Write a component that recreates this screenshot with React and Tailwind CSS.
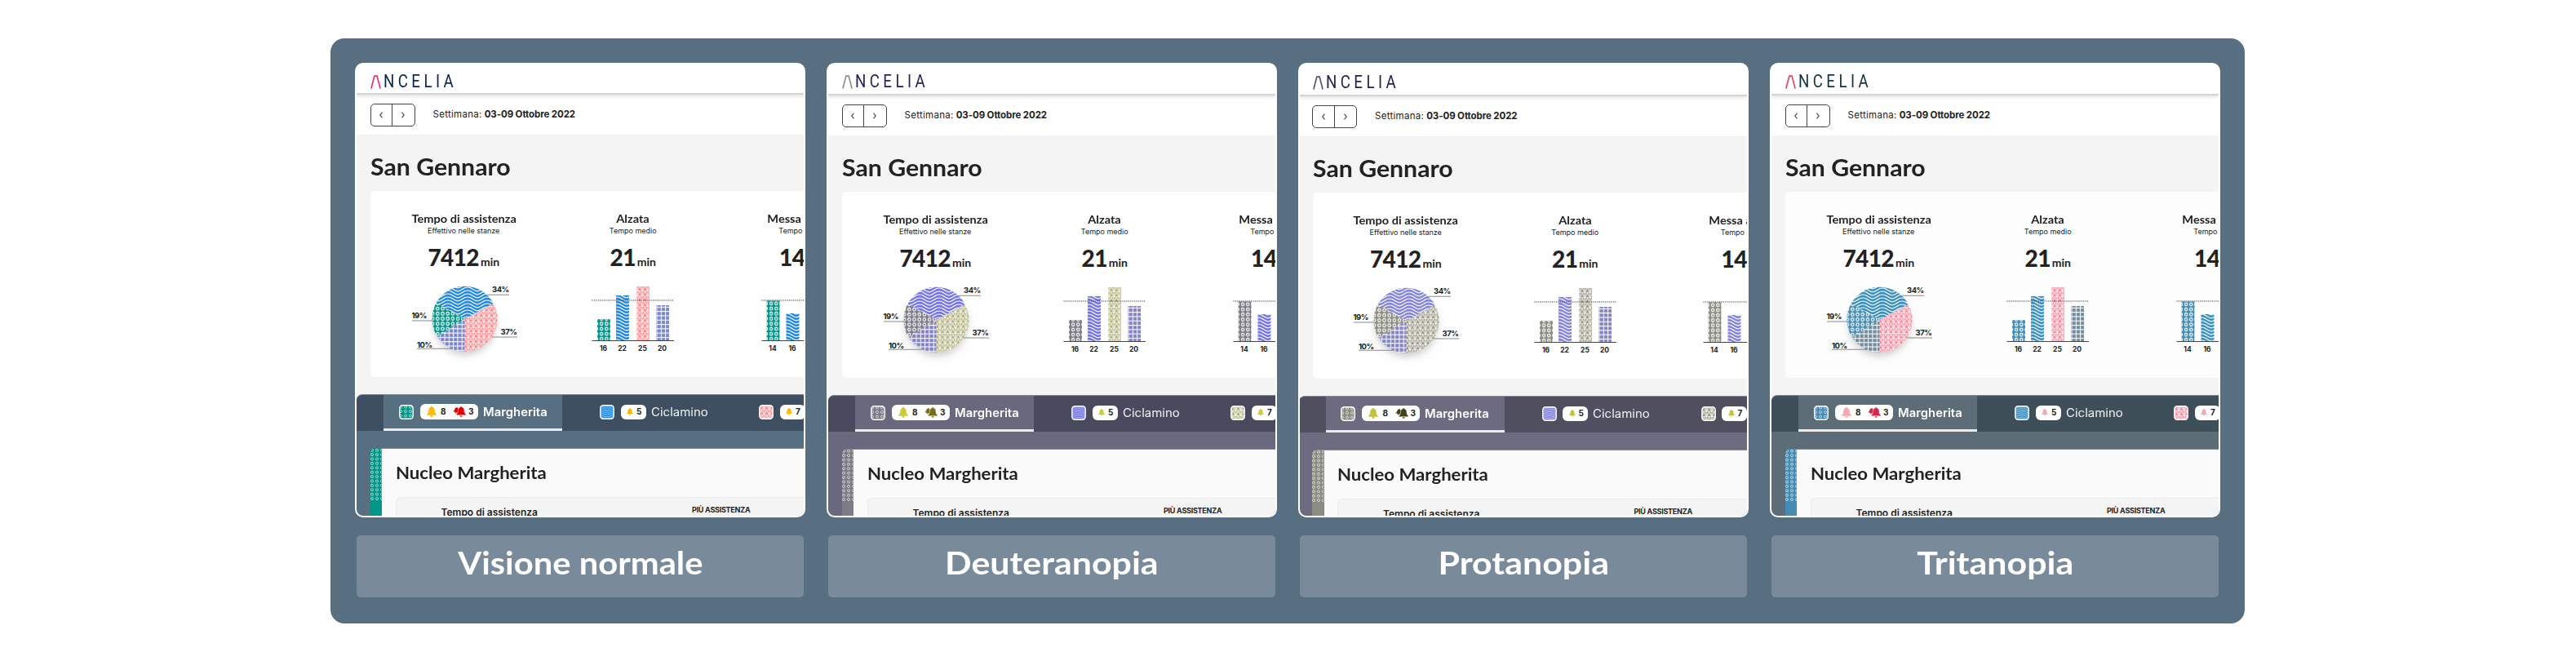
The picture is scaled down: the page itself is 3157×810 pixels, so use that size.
const visions = [
  {
    id: 'normale', label: 'Visione normale', stretch: 'scale-x-[1.07]', shift: '', header: 'h-[37px]',
    mark: '#ec2f7b', brand: '#0b2350', ring: '#009688', wave: '#1e8ce8', tri: '#ff8588', grid: '#7b86cf',
    bell: '#ffb900', alarm: '#e20000', bar: 'bg-[#3d4f60]', tab: 'bg-[#586e81]', edge: 'border-[#7d8d9b]', card: 'bg-white',
  },
  {
    id: 'deuteranopia', label: 'Deuteranopia', stretch: 'scale-x-[1.1]', shift: '', header: 'h-[38px]',
    mark: '#8f8f83', brand: '#25235a', ring: '#7c7b86', wave: '#7676e6', tri: '#b0b07d', grid: '#8382c9',
    bell: '#cbcc38', alarm: '#736d1c', bar: 'bg-[#4a4a5e]', tab: 'bg-[#69687e]', edge: 'border-[#8a899a]', card: 'bg-[#fefefe]',
  },
  {
    id: 'protanopia', label: 'Protanopia', stretch: 'scale-x-[1.1]', shift: 'pt-px -ml-[1.5px]', header: 'h-[38px]',
    mark: '#59507f', brand: '#242150', ring: '#8c8c82', wave: '#8484e3', tri: '#999984', grid: '#8584c8',
    bell: '#c3c23b', alarm: '#43401a', bar: 'bg-[#504f60]', tab: 'bg-[#6c6b80]', edge: 'border-[#8c8b9b]', card: 'bg-[#fefefe]',
  },
  {
    id: 'tritanopia', label: 'Tritanopia', stretch: 'scale-x-[1.1]', shift: '', header: 'h-[38px]',
    mark: '#e04564', brand: '#17303f', ring: '#458cb4', wave: '#3d90c0', tri: '#f4899c', grid: '#738b9d',
    bell: '#f4a9b4', alarm: '#cf2a4b', bar: 'bg-[#3f4f59]', tab: 'bg-[#5c6d78]', edge: 'border-[#808d96]', card: 'bg-[#fdfdfd]',
  },
];

const Patterns = ({ v }) => (
  <svg aria-hidden className="absolute size-0">
    <defs>
      <pattern id={`ring-${v.id}`} width="6.2" height="6.2" patternUnits="userSpaceOnUse">
        <rect width="6.2" height="6.2" fill={v.ring} />
        <ellipse cx="3.1" cy="3.1" rx="1.7" ry="1.9" fill="none" stroke="#fff" strokeWidth="1.1" />
      </pattern>
      <pattern id={`dot-${v.id}`} width="6" height="5.4" patternUnits="userSpaceOnUse">
        <rect width="6" height="5.4" fill={v.ring} />
        <circle cx="2" cy="2.7" r="1.5" fill="none" stroke="#fff" strokeOpacity=".75" strokeWidth=".8" />
      </pattern>
      <pattern id={`wave-${v.id}`} width="24" height="4" patternUnits="userSpaceOnUse">
        <rect width="24" height="4" fill={v.wave} />
        {[-8, -4, 0, 4, 8].map((y) => (
          <path key={y} d={`M-1 ${y + 5}C4 ${y + 5} 7 ${y} 12 ${y}S20 ${y + 5} 25 ${y + 5}`} fill="none" stroke="#fff" strokeWidth="1.2" />
        ))}
      </pattern>
      <pattern id={`arc-${v.id}`} width="18" height="2.6" patternUnits="userSpaceOnUse">
        <rect width="18" height="2.6" fill={v.wave} />
        {[-5.2, -2.6, 0, 2.6].map((y) => (
          <path key={y} d={`M0 ${y + 5}Q9 ${y - 3} 18 ${y + 5}`} fill="none" stroke="#fff" strokeOpacity=".7" strokeWidth=".7" />
        ))}
      </pattern>
      <pattern id={`tri-${v.id}`} width="6.4" height="6.4" patternUnits="userSpaceOnUse">
        <rect width="6.4" height="6.4" fill={v.tri} />
        <path d="M0 6.4L3.2 0L6.4 6.4M0 6.2H6.4M0 0V6.4M6.4 0V6.4" fill="none" stroke="#fff" strokeWidth=".9" />
      </pattern>
      <pattern id={`grid-${v.id}`} width="5.3" height="5.3" patternUnits="userSpaceOnUse">
        <rect width="5.3" height="5.3" fill={v.grid} />
        <path d="M0 .5H5.3M.5 0V5.3" stroke="#fff" strokeWidth="1" />
      </pattern>
    </defs>
  </svg>
);

const Logo = ({ v }) => (
  <div className="flex items-center gap-[3px]">
    <svg viewBox="0 0 13 17" className="w-[13px] h-[17px]" fill="none" stroke={v.mark} strokeWidth="1.7">
      <path d="M.9 16.5L4.9 1.1H8.1L12.1 16.5" />
    </svg>
    <span className="origin-left scale-x-85 font-['Roboto'] text-[22px] leading-none tracking-[5.2px]" style={{ color: v.brand }}>NCELIA</span>
  </div>
);

const Pie = ({ v }) => (
  <svg viewBox="0 0 207 100" className="w-[207px] h-[100px] overflow-visible font-['Inter'] text-[9.5px] font-bold tracking-[-0.5px]">
    <circle cx="104.5" cy="49" r="38" className="drop-shadow-[0_4px_5px_rgba(0,0,0,0.2)]" fill="#e4e4e4" />
    <path d="M104.5 46.7L69.5 27.3A40 40 0 0 1 139.8 27.9Z" fill={`url(#wave-${v.id})`} />
    <path d="M104.5 46.7L139.8 27.9A40 40 0 0 1 104.5 86.7Z" fill={`url(#tri-${v.id})`} />
    <path d="M104.5 46.7V86.7A40 40 0 0 1 71 68.6Z" fill={`url(#grid-${v.id})`} />
    <path d="M104.5 46.7L71 68.6A40 40 0 0 1 69.5 27.3Z" fill={`url(#ring-${v.id})`} />
    <g stroke="#8a8a8a" strokeWidth="1.1">
      <path d="M132 17.2H159M138 69H169M40 49H65M46 83.3H90" />
    </g>
    <g fill="#222">
      <text x="138" y="14">34%</text>
      <text x="148.5" y="66.3">37%</text>
      <text x="39.5" y="46">19%</text>
      <text x="46" y="81.5">10%</text>
    </g>
  </svg>
);

const Bars = ({ v, bars }) => (
  <svg viewBox="0 0 207 100" className="w-[207px] h-[100px] font-['Inter'] text-[8.5px] font-bold">
    {bars.map(([value, x, y, kind]) => (
      <g key={kind}>
        <rect x={x} y={y} width="16" height={73 - y} fill={`url(#${kind}-${v.id})`} />
        <text x={x + 7.5} y="86.3" textAnchor="middle" fill="#222">{value}</text>
      </g>
    ))}
    <path d="M53.5 24H154" stroke="#333" strokeWidth="1" strokeDasharray="1.2 1.2" />
    <path d="M53.5 73.5H154" stroke="#444" strokeWidth="1" />
  </svg>
);

const Stat = ({ title, sub, value, children }) => (
  <div className="flex flex-col items-center w-[207.5px] shrink-0 whitespace-nowrap text-[#222]">
    <h3 className="scale-x-[1.04] font-['Lato'] font-bold text-[14px] leading-[14px]">{title}</h3>
    <p className="mt-[2px] font-['Inter'] text-[9px] leading-[12px]">{sub}</p>
    <p className="mt-[12px] h-7 flex items-baseline gap-[2px] font-['Lato'] font-black text-[28px] leading-[28px] tracking-[-0.6px]">
      {value}
      <span className="text-[14px] font-bold tracking-normal">min</span>
    </p>
    <div className="mt-[15px]">{children}</div>
  </div>
);

const BELL = 'M6 0C6.7 0 7.1.5 7.1 1.1C8.9 1.6 9.7 3 9.7 4.8C9.7 7.5 10.5 8.7 11.8 9.7V10.7H.2V9.7C1.5 8.7 2.3 7.5 2.3 4.8C2.3 3 3.1 1.6 4.9 1.1C4.9.5 5.3 0 6 0ZM4.3 11H7.7C7.6 12.3 6.900 13 6 13S4.400 12.300 4.300 11Z';

const Bell = ({ color, className }) => (
  <svg viewBox="0 0 12 13" className={className} fill={color}>
    <path d={BELL} />
  </svg>
);

// Small bell tucked behind a full-size one
const Alarm = ({ color }) => (
  <svg viewBox="0 0 16 13" className="w-[16px] h-[13px]" fill={color}>
    <path d={BELL} transform="translate(1.8 .2) rotate(14) scale(.58)" />
    <path d={BELL} transform="translate(4.2 0)" stroke="#fff" strokeWidth=".4" />
  </svg>
);

const Swatch = ({ v, kind }) => (
  <svg viewBox="0 0 18 18" className="size-[18px] shrink-0">
    <rect x=".8" y=".8" width="16.4" height="16.4" rx="3.5" fill={`url(#${kind}-${v.id})`} stroke="#fff" strokeWidth="1.4" />
  </svg>
);

const Tabs = ({ v }) => (
  <div className={`h-[45px] pl-[33px] flex rounded-tl-[7px] border-t overflow-hidden font-['Inter'] text-white whitespace-nowrap ${v.bar} ${v.edge}`}>
    <div className={`w-[219px] shrink-0 pl-[18.5px] flex items-center border-b-[3px] border-[#ebebeb] ${v.tab}`}>
      <Swatch v={v} kind="dot" />
      <span className="ml-[8px] w-[71px] h-[19.5px] pl-[8px] flex items-center rounded-[6px] bg-white text-[10px] font-bold text-[#222]">
        <Bell color={v.bell} className="w-[12px] h-[13px]" />
        <span className="ml-[5.5px] w-[7px]">8</span>
        <span className="ml-[8px]"><Alarm color={v.alarm} /></span>
        <span className="ml-[3px]">3</span>
      </span>
      <span className="ml-[6px] origin-left scale-x-[1.06] text-[14px] font-semibold">Margherita</span>
    </div>
    <div className="w-[195px] shrink-0 pl-[46px] pb-[3px] flex items-center">
      <Swatch v={v} kind="arc" />
      <span className="ml-[7.5px] w-[31px] h-[18px] pl-[7.5px] flex items-center rounded-[6px] bg-white text-[10px] font-bold text-[#222]">
        <Bell color={v.bell} className="w-[8px] h-[8.5px]" />
        <span className="ml-[4px]">5</span>
      </span>
      <span className="ml-[6px] origin-left scale-x-[1.07] text-[14px] text-[#f0f2f4]">Ciclamino</span>
    </div>
    <div className="w-[195px] shrink-0 pl-[46px] pb-[3px] flex items-center">
      <Swatch v={v} kind="tri" />
      <span className="ml-[7.5px] w-[31px] h-[18px] pl-[7.5px] flex items-center rounded-[6px] bg-white text-[10px] font-bold text-[#222]">
        <Bell color={v.bell} className="w-[8px] h-[8.5px]" />
        <span className="ml-[4px]">7</span>
      </span>
    </div>
  </div>
);

const Nucleo = ({ v }) => (
  <div className={`h-[104px] pt-[20.5px] pl-[16.5px] ${v.tab}`}>
    <div className="h-full flex">
      <svg className="w-[14.5px] h-[90px] shrink-0 rounded-tl-[6px]">
        <rect width="14.5" height="90" fill={v.ring} />
        <rect width="14.5" height="65" fill={`url(#dot-${v.id})`} />
      </svg>
      <div className={`grow pl-[16.5px] pt-[17px] border-t bg-[#fafafa] ${v.edge}`}>
        <h2 className="origin-left scale-x-[1.08] font-['Lato'] font-bold text-[20.5px] leading-[24px] text-[#222]">Nucleo Margherita</h2>
        <div className="mt-[18px] h-[60px] flex rounded-l-[6px] border border-r-0 border-[#ececec] bg-[#f4f4f4] font-['Inter'] text-[#222] whitespace-nowrap">
          <span className="w-[307.5px] ml-[55px] shrink-0 pt-[11.5px] text-[12px] leading-[14px] font-semibold">Tempo di assistenza</span>
          <span className="pt-[9.5px] text-[9px] leading-[12px] font-bold tracking-[-0.25px]">PIÙ ASSISTENZA</span>
        </div>
      </div>
    </div>
  </div>
);

const Screen = ({ v }) => (
  <div className="w-[552px] h-[557px] rounded-[10px] border-2 border-white bg-white overflow-hidden">
    <Patterns v={v} />
    <div className={v.shift}>
      <div className={`${v.header} relative pl-[17px] pt-[10px] border-b-2 border-[#d4d4d4] shadow-[0_2px_4px_rgba(0,0,0,0.12)]`}>
        <Logo v={v} />
      </div>
      <div className="h-[49px] pl-[16.5px] flex items-center font-['Inter'] text-[11.5px] text-[#222]">
        <div className="w-[55px] h-[28px] flex rounded-[5px] border border-[#444]">
          <span className="w-1/2 flex items-center justify-center border-r border-[#444]">
            <svg viewBox="0 0 4 8" className="w-[4px] h-[8px]" fill="none" stroke="#4a5a68" strokeWidth="1.3"><path d="M3.5 .7L.8 4L3.5 7.3" /></svg>
          </span>
          <span className="w-1/2 flex items-center justify-center">
            <svg viewBox="0 0 4 8" className="w-[4px] h-[8px]" fill="none" stroke="#4a5a68" strokeWidth="1.3"><path d="M.5 .7L3.2 4L.5 7.3" /></svg>
          </span>
        </div>
        <span className="ml-[22px] tracking-[0.3px]">Settimana:</span>
        <span className="ml-[3px] font-bold tracking-[-0.1px]">03-09 Ottobre 2022</span>
      </div>
      <div className="bg-[#f4f4f4]">
        <div className="h-[318px] pl-[17px] pt-[24px]">
          <h1 className="origin-left scale-x-[1.08] font-['Lato'] font-bold text-[28px] leading-[30px] text-[#222]">San Gennaro</h1>
          <div className={`mt-[14.5px] h-[228px] pt-[27.5px] pl-[10.5px] flex rounded-l-[5px] ${v.card}`}>
            <Stat title="Tempo di assistenza" sub="Effettivo nelle stanze" value="7412">
              <Pie v={v} />
            </Stat>
            <Stat title="Alzata" sub="Tempo medio" value="21">
              <Bars v={v} bars={[[16, 60, 47, 'ring'], [22, 83, 18, 'wave'], [25, 108, 7, 'tri'], [20, 132, 30, 'grid']]} />
            </Stat>
            <Stat title="Messa a letto" sub="Tempo medio" value="14">
              <Bars v={v} bars={[[14, 59.5, 24.5, 'ring'], [16, 83.5, 40, 'wave']]} />
            </Stat>
          </div>
        </div>
        <Tabs v={v} />
      </div>
      <Nucleo v={v} />
    </div>
  </div>
);

const App = () => (
  <div className="w-[3157px] h-[810px] pl-[405px] pt-[47px] bg-white overflow-hidden">
    <main className="w-[2346px] h-[717px] rounded-[17px] bg-[#586e81] p-[30px] flex gap-[26px]">
      {visions.map((v) => (
        <section key={v.id} className="flex flex-col items-center">
          <Screen v={v} />
          <div className="mt-[22px] w-[548px] h-[76px] flex justify-center rounded-[5px] bg-[#798b9a]">
            <h2 className={`font-['Lato'] font-bold text-[39px] leading-[66px] text-white ${v.stretch}`}>{v.label}</h2>
          </div>
        </section>
      ))}
    </main>
  </div>
);

export default App;
